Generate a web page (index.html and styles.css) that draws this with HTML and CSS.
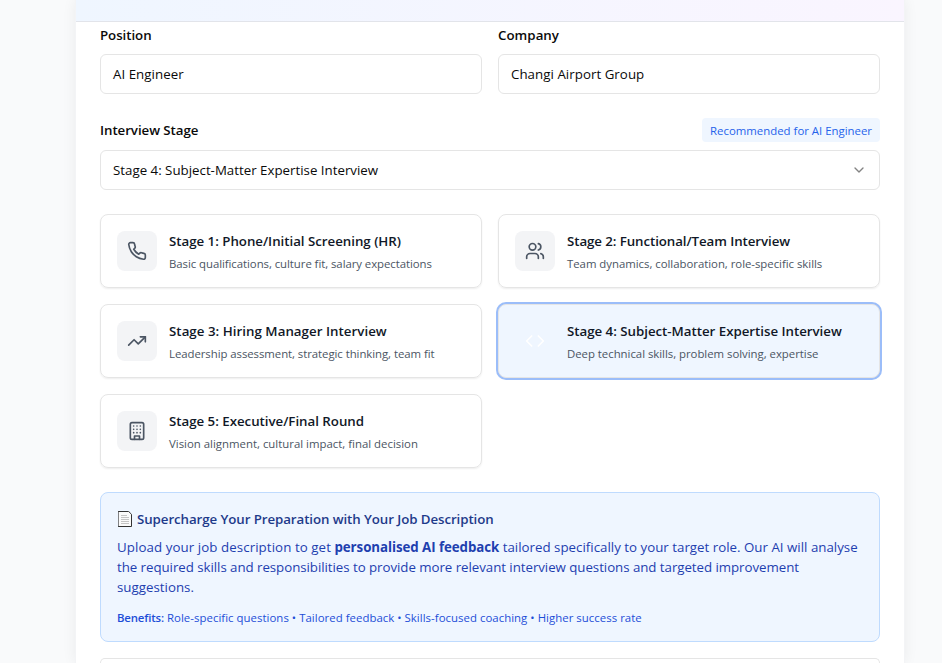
FILE: index.html
```
<!DOCTYPE html>
<html lang="en">
<head>
<meta charset="utf-8">
<title>Interview Setup</title>
<link rel="stylesheet" href="styles.css">
</head>
<body>
<main class="panel">
  <header class="panel-header"></header>
  <form class="panel-body">
    <div class="grid fields">
      <div class="field">
        <label class="label">Position</label>
        <div class="input">AI Engineer</div>
      </div>
      <div class="field">
        <label class="label label-wide">Company</label>
        <div class="input">Changi Airport Group</div>
      </div>
    </div>

    <div class="stage-head">
      <label class="label">Interview Stage</label>
      <span class="badge">Recommended for AI Engineer</span>
    </div>
    <div class="input select">
      <span>Stage 4: Subject-Matter Expertise Interview</span>
      <svg class="chevron" viewBox="0 0 24 24"><path d="m6 9 6 6 6-6"/></svg>
    </div>

    <div class="grid stages">
      <div class="card">
        <div class="icon"><svg viewBox="0 0 24 24"><path d="M22 16.92v3a2 2 0 0 1-2.18 2 19.79 19.79 0 0 1-8.63-3.07 19.5 19.5 0 0 1-6-6 19.79 19.79 0 0 1-3.07-8.67A2 2 0 0 1 4.11 2h3a2 2 0 0 1 2 1.72 12.84 12.84 0 0 0 .7 2.81 2 2 0 0 1-.45 2.11L8.09 9.91a16 16 0 0 0 6 6l1.27-1.27a2 2 0 0 1 2.11-.45 12.84 12.84 0 0 0 2.81.7A2 2 0 0 1 22 16.92z"/></svg></div>
        <div class="text">
          <h3 class="title">Stage 1: Phone/Initial Screening (HR)</h3>
          <p class="desc tight">Basic qualifications, culture fit, salary expectations</p>
        </div>
      </div>
      <div class="card">
        <div class="icon"><svg viewBox="0 0 24 24"><path d="M16 21v-2a4 4 0 0 0-4-4H6a4 4 0 0 0-4 4v2"/><circle cx="9" cy="7" r="4"/><path d="M22 21v-2a4 4 0 0 0-3-3.87"/><path d="M16 3.13a4 4 0 0 1 0 7.75"/></svg></div>
        <div class="text">
          <h3 class="title tight-title">Stage 2: Functional/Team Interview</h3>
          <p class="desc">Team dynamics, collaboration, role-specific skills</p>
        </div>
      </div>
      <div class="card">
        <div class="icon"><svg viewBox="0 0 24 24"><path d="M22 7 13.5 15.5 8.5 10.5 2 17"/><path d="M16 7h6v6"/></svg></div>
        <div class="text">
          <h3 class="title wide-title">Stage 3: Hiring Manager Interview</h3>
          <p class="desc tight">Leadership assessment, strategic thinking, team fit</p>
        </div>
      </div>
      <div class="card selected">
        <div class="icon"><svg viewBox="0 0 24 24"><path d="m16 18 6-6-6-6"/><path d="m8 6-6 6 6 6"/></svg></div>
        <div class="text">
          <h3 class="title">Stage 4: Subject-Matter Expertise Interview</h3>
          <p class="desc">Deep technical skills, problem solving, expertise</p>
        </div>
      </div>
      <div class="card">
        <div class="icon"><svg viewBox="0 0 24 24"><rect x="4" y="2" width="16" height="20" rx="2"/><path d="M9 22v-4h6v4"/><path d="M8 6h.01M16 6h.01M12 6h.01M12 10h.01M12 14h.01M16 10h.01M16 14h.01M8 10h.01M8 14h.01"/></svg></div>
        <div class="text">
          <h3 class="title">Stage 5: Executive/Final Round</h3>
          <p class="desc loose">Vision alignment, cultural impact, final decision</p>
        </div>
      </div>
    </div>

    <section class="callout">
      <h4 class="callout-title">
        <svg class="page-icon" viewBox="0 0 14 16"><path class="sheet" d="M.5.5h10.2l2.8 2.8v12.2H.5z"/><path class="rule" d="M3 4.5h6M3 6.5h8M3 8.5h8M3 10.5h8M3 12.5h8"/></svg>
        <span>Supercharge Your Preparation with Your Job Description</span>
      </h4>
      <p class="callout-text"><span class="lead">Upload your job description to get</span> <strong>personalised AI feedback</strong> tailored specifically to your target role. Our AI will analyse <span class="second">the required skills and responsibilities to provide more relevant interview questions and targeted improvement</span> suggestions.</p>
      <p class="benefits"><b>Benefits:</b> Role-specific questions • Tailored feedback • Skills-focused coaching • Higher success rate</p>
    </section>

    <section class="next"></section>
  </form>
</main>
</body>
</html>
```
FILE: styles.css
```
* { box-sizing: border-box; margin: 0; padding: 0; }

body {
  height: 663px;
  overflow: hidden;
  background: #f9fafb;
  font-family: "Open Sans", "Segoe UI", sans-serif;
  font-size: 13.3px;
  line-height: 20px;
  color: #0a0a0a;
}

svg {
  fill: none;
  stroke: currentColor;
  stroke-width: 2;
  stroke-linecap: round;
  stroke-linejoin: round;
}

.panel {
  width: 828px;
  height: 663px;
  margin-left: 76px;
  background: #fff;
  box-shadow: 0 0 0 1px #f3f4f6, 0 0 14px rgba(0, 0, 0, .07);
}

.panel-header {
  height: 22px;
  border-bottom: 1px solid #e2e4ea;
  background: linear-gradient(90deg, #eff6ff, #faf5ff);
}

.panel-body { padding: 6px 24px 0; }

.grid {
  display: grid;
  grid-template-columns: 1fr 1fr;
  gap: 16px;
}

.field { display: flex; flex-direction: column; gap: 12px; }

.label {
  font-weight: 600;
  line-height: 14px;
  letter-spacing: -.06px;
}
.label-wide { letter-spacing: .03px; }

.input {
  display: flex;
  align-items: center;
  height: 40px;
  padding: 0 12px;
  border: 1px solid #e5e5e5;
  border-radius: 6px;
}
.fields .input { letter-spacing: .04px; }

.stage-head {
  display: flex;
  align-items: center;
  justify-content: space-between;
  margin: 24px 0 8px;
}

.badge {
  padding: 5px 8px 3px;
  border-radius: 4px;
  background: #eff6ff;
  color: #2563eb;
  font-size: 11.4px;
  line-height: 16px;
}

.select { justify-content: space-between; }
.chevron { width: 16px; height: 16px; opacity: .5; }

.stages { margin-top: 24px; }

.card {
  display: flex;
  gap: 12px;
  height: 74px;
  padding: 16px;
  border: 1px solid #e5e5e5;
  border-radius: 8px;
  box-shadow: 0 1px 2px rgba(0, 0, 0, .07);
}
.card.selected {
  background: #eff6ff;
  box-shadow: 0 0 0 2px #9bbdf9;
}

.icon {
  display: grid;
  place-items: center;
  width: 40px;
  height: 40px;
  border-radius: 8px;
  background: #f3f4f6;
  color: #4b5563;
}
.icon svg { width: 20px; height: 20px; }
.selected .icon { background: none; color: #fff; }

.title {
  font-size: 13.3px;
  font-weight: 600;
  line-height: 20px;
  letter-spacing: -.025px;
  color: #111827;
}
.tight-title { letter-spacing: -.08px; }
.wide-title { letter-spacing: .03px; }

.desc {
  margin-top: 5px;
  font-size: 11.4px;
  line-height: 16px;
  letter-spacing: -.03px;
  color: #4b5563;
}
.desc.tight { letter-spacing: -.06px; }
.desc.loose { letter-spacing: 0; }

.callout {
  margin-top: 24px;
  padding: 16px;
  height: 150px;
  border: 1px solid #bfdbfe;
  border-radius: 8px;
  background: #eff6ff;
}

.callout-title {
  display: flex;
  align-items: center;
  gap: 5px;
  padding-left: 1px;
  font-size: 13.3px;
  font-weight: 600;
  letter-spacing: -.08px;
  color: #1e3a8a;
}
.page-icon { width: 14px; height: 16px; stroke-width: 1; }
.sheet { fill: #fafafa; stroke: #333; }
.rule { stroke: #c4c4c4; stroke-linecap: butt; }

.callout-text {
  margin-top: 8px;
  letter-spacing: .008px;
  color: #1e40af;
}
.callout-text strong { letter-spacing: -.06px; }
.lead { letter-spacing: .077px; }
.second { letter-spacing: -.048px; }

.benefits {
  margin-top: 13px;
  font-size: 11.4px;
  line-height: 16px;
  letter-spacing: .035px;
  color: #1d4ed8;
}
.benefits b { font-weight: 600; letter-spacing: -.15px; }

.next {
  height: 5px;
  margin-top: 16px;
  border: 1px solid #e5e5e5;
  border-bottom: 0;
  border-radius: 8px 8px 0 0;
}
```
